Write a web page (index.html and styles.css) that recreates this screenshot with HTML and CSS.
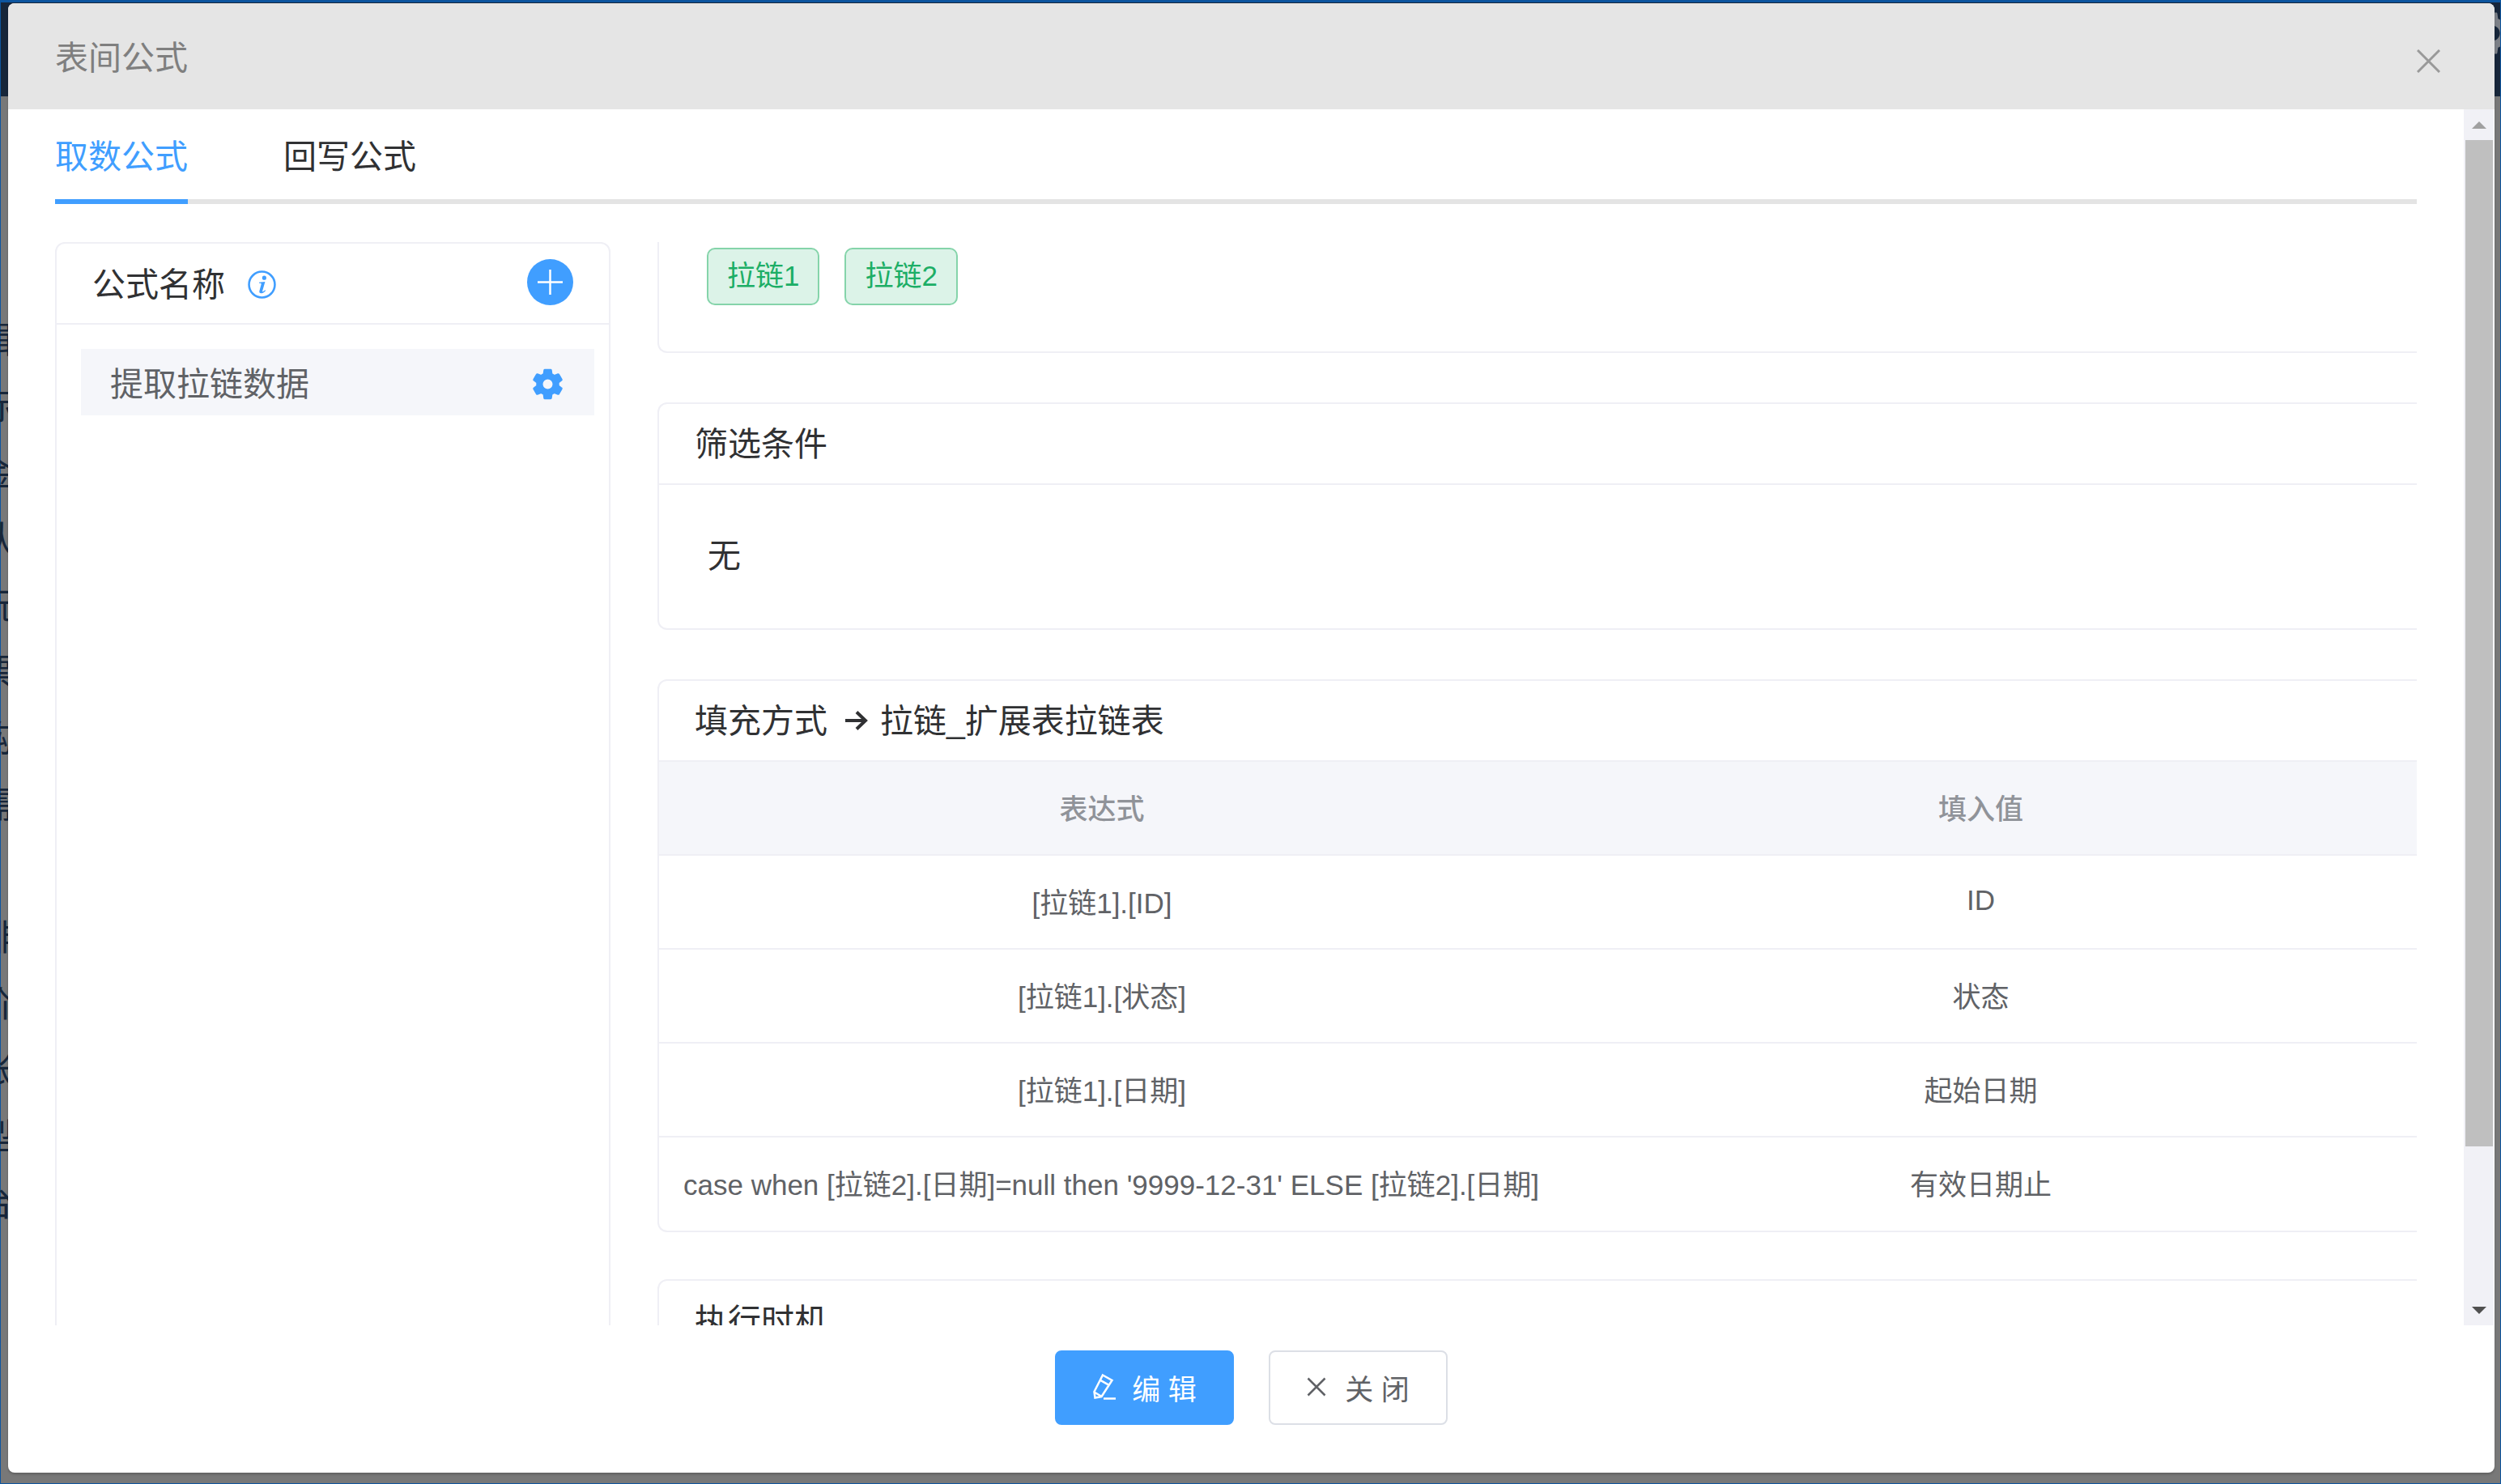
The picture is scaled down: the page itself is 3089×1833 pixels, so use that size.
FILE: index.html
```html
<!DOCTYPE html>
<html lang="zh-CN">
<head>
  <meta charset="UTF-8">
  <title>表间公式</title>
  <link rel="stylesheet" href="styles.css">
</head>
<body>
  <div class="desktop">
    <div class="desktop-top">
      <svg class="desktop-gear" viewBox="0 0 24 24"><path d="M19.14 12.94c.04-.3.06-.61.06-.94 0-.32-.02-.64-.07-.94l2.03-1.58c.18-.14.23-.41.12-.61l-1.92-3.32c-.12-.22-.37-.29-.59-.22l-2.39.96c-.5-.38-1.03-.7-1.62-.94l-.36-2.54c-.04-.24-.24-.41-.48-.41h-3.84c-.24 0-.43.17-.47.41l-.36 2.54c-.59.24-1.13.57-1.62.94l-2.39-.96c-.22-.08-.47 0-.59.22L2.74 8.87c-.12.21-.08.47.12.61l2.03 1.58c-.05.3-.09.63-.09.94s.02.64.07.94l-2.03 1.58c-.18.14-.23.41-.12.61l1.92 3.32c.12.22.37.29.59.22l2.39-.96c.5.38 1.03.7 1.62.94l.36 2.54c.05.24.24.41.48.41h3.84c.24 0 .44-.17.47-.41l.36-2.54c.59-.24 1.13-.56 1.62-.94l2.39.96c.22.08.47 0 .59-.22l1.92-3.32c.12-.22.07-.47-.12-.61l-2.01-1.58zM12 15.6c-1.98 0-3.6-1.62-3.6-3.6s1.62-3.6 3.6-3.6 3.6 1.62 3.6 3.6-1.62 3.6-3.6 3.6z"/></svg>
    </div>
    <div class="desktop-menu">
      <span>辑</span><span>际</span><span>金</span><span>认</span><span>玩</span><span>票</span><span>购</span><span>需</span>
      <span></span><span>排</span><span>价</span><span>帐</span><span>型</span><span>台</span><span>B</span><span>B</span>
    </div>
  </div>

  <div class="dialog">
    <div class="dialog-header">
      <span class="dialog-title">表间公式</span>
      <svg class="dialog-close" viewBox="0 0 29 29"><path d="M1 1l27 27M28 1L1 28"/></svg>
    </div>

    <div class="dialog-body">
      <div class="main">
        <div class="tabs">
          <div class="tab active">取数公式</div>
          <div class="tab">回写公式</div>
        </div>

        <div class="panes">
          <div class="card formula-list">
            <div class="card-title list-title">
              <span>公式名称</span>
              <svg class="info-icon" viewBox="0 0 34 34">
                <circle cx="17" cy="17" r="15.5"/>
                <path class="info-mark" d="M19.8 6.4a2.5 2.5 0 1 1 0 5a2.5 2.5 0 0 1 0-5zM13.6 14.4l7.2-.9-3.2 11.2c-.2.8.3 1 .9.6l2.4-1.8.6.8c-1.5 1.6-3.1 3-5.1 3.2-2 .1-2.9-1-2.4-2.9l2.2-8c.2-.8-.3-1.2-2.6-1.2z"/>
              </svg>
              <div class="add-btn">
                <svg viewBox="0 0 57 57"><path d="M28.5 13v31M13 28.5h31"/></svg>
              </div>
            </div>
            <div class="formula-item">
              <span>提取拉链数据</span>
              <svg class="gear-icon" viewBox="1.6 1.6 20.8 20.8"><path d="M19.14 12.94c.04-.3.06-.61.06-.94 0-.32-.02-.64-.07-.94l2.03-1.58c.18-.14.23-.41.12-.61l-1.92-3.32c-.12-.22-.37-.29-.59-.22l-2.39.96c-.5-.38-1.03-.7-1.62-.94l-.36-2.54c-.04-.24-.24-.41-.48-.41h-3.84c-.24 0-.43.17-.47.41l-.36 2.54c-.59.24-1.13.57-1.62.94l-2.39-.96c-.22-.08-.47 0-.59.22L2.74 8.87c-.12.21-.08.47.12.61l2.03 1.58c-.05.3-.09.63-.09.94s.02.64.07.94l-2.03 1.58c-.18.14-.23.41-.12.61l1.92 3.32c.12.22.37.29.59.22l2.39-.96c.5.38 1.03.7 1.62.94l.36 2.54c.05.24.24.41.48.41h3.84c.24 0 .44-.17.47-.41l.36-2.54c.59-.24 1.13-.56 1.62-.94l2.39.96c.22.08.47 0 .59-.22l1.92-3.32c.12-.22.07-.47-.12-.61l-2.01-1.58zM12 15.6c-1.98 0-3.6-1.62-3.6-3.6s1.62-3.6 3.6-3.6 3.6 1.62 3.6 3.6-1.62 3.6-3.6 3.6z"/></svg>
            </div>
          </div>

          <div class="detail">
            <div class="card tags-card">
              <span class="tag">拉链1</span>
              <span class="tag">拉链2</span>
            </div>

            <div class="card filter-card">
              <div class="card-title">筛选条件</div>
              <div class="filter-text">无</div>
            </div>

            <div class="card fill-card">
              <div class="card-title">
                <span>填充方式</span>
                <svg class="arrow-icon" viewBox="0 0 30 26"><path d="M2 13h25M16 2.5L27 13 16 23.5"/></svg>
                <span>拉链_扩展表拉链表</span>
              </div>
              <table class="fill-table">
                <thead>
                  <tr><th class="col-expr">表达式</th><th>填入值</th></tr>
                </thead>
                <tbody>
                  <tr><td>[拉链1].[ID]</td><td>ID</td></tr>
                  <tr><td>[拉链1].[状态]</td><td>状态</td></tr>
                  <tr><td>[拉链1].[日期]</td><td>起始日期</td></tr>
                  <tr><td>case when [拉链2].[日期]=null then '9999-12-31' ELSE [拉链2].[日期]</td><td>有效日期止</td></tr>
                </tbody>
              </table>
            </div>

            <div class="card">
              <div class="card-title">执行时机</div>
            </div>
          </div>
        </div>
      </div>

      <div class="scrollbar">
        <div class="scroll-btn"><i class="arrow-up"></i></div>
        <div class="scroll-thumb"></div>
        <div class="scroll-rest"><i class="arrow-down"></i></div>
      </div>
    </div>

    <div class="dialog-footer">
      <button class="btn btn-primary">
        <svg viewBox="0 0 30 34"><path d="M13 2.5L24.5 9 11.5 29l-8 1.500-1-7.500zM9.700 8.700l12 6.600M1.700 23l9.600 5.700M14 31.500h15"/></svg>
        <span>编 辑</span>
      </button>
      <button class="btn btn-close">
        <svg viewBox="0 0 24 24"><path d="M1.500 1.500l21 21M22.500 1.500l-21 21"/></svg>
        <span>关 闭</span>
      </button>
    </div>
  </div>
</body>
</html>
```

FILE: styles.css
```css
* {
  margin: 0;
  padding: 0;
  box-sizing: border-box;
}
html,
body {
  width: 3089px;
  height: 1833px;
  overflow: hidden;
}
body {
  position: relative;
  font-family: "Liberation Sans", "Noto Sans CJK SC", sans-serif;
  color: #303133;
}

/* page behind the dialog */
.desktop {
  height: 100%;
  border: 1px solid #0d559f;
  border-top-width: 3px;
  background-color: #787878;
}
.desktop-top {
  position: relative;
  height: 116px;
  background-color: #17263a;
  overflow: hidden;
}
.desktop-gear {
  position: absolute;
  right: -22px;
  top: 6px;
  width: 64px;
  height: 64px;
  fill: #7c8087;
}
.desktop-menu {
  display: flex;
  flex-direction: column;
  margin: 280px 0 0 -28px;
  font-size: 44px;
  color: #17263a;
}
.desktop-menu span {
  height: 82px;
  line-height: 44px;
}

/* dialog */
.dialog {
  position: absolute;
  left: 10px;
  top: 4px;
  width: 3071px;
  height: 1815px;
  display: flex;
  flex-direction: column;
  border-radius: 8px;
  background-color: #fff;
  box-shadow: 0 2px 3px rgba(0,0,0,.2);
  overflow: hidden;
}
.dialog-header {
  display: flex;
  flex: none;
  align-items: center;
  justify-content: space-between;
  height: 131px;
  padding: 0 67px 0 58px;
  background-color: #e5e5e5;
}
.dialog-title {
  margin-bottom: 3px;
  font-size: 41px;
  color: #7f7f7f;
}
.dialog-close {
  width: 29px;
  height: 29px;
  margin-top: 11px;
}
.dialog-close path {
  fill: none;
  stroke: #999;
  stroke-width: 3;
}
.dialog-body {
  display: flex;
  height: 1502px;
}
.main {
  flex: 1;
  min-width: 0;
  padding: 0 58px;
}

/* tabs */
.tabs {
  display: flex;
  gap: 118px;
  height: 117px;
  border-bottom: 6px solid #e4e4e4;
}
.tab {
  width: 164px;
  height: 117px;
  padding-top: 5px;
  line-height: 108px;
  text-align: center;
  font-size: 41px;
}
.tab.active {
  border-bottom: 6px solid #409eff;
  color: #409eff;
}

/* cards */
.panes {
  display: flex;
  gap: 58px;
  height: 1338px;
  margin-top: 47px;
  overflow: hidden;
}
.card {
  flex: none;
  border: 2px solid #efeff5;
  border-right: 0;
  border-radius: 12px 0 0 12px;
  margin-bottom: 61px;
}
.card-title {
  display: flex;
  align-items: center;
  height: 100px;
  padding: 0 0 6px 44px;
  border-bottom: 2px solid #efeff5;
  font-size: 41px;
}
.formula-list {
  width: 686px;
  height: 1400px;
  border-right: 2px solid #efeff5;
  border-radius: 12px;
}
.list-title {
  padding: 0 44px 4px 44px;
}
.info-icon {
  width: 35px;
  height: 35px;
  margin: 7px 0 0 28px;
  fill: none;
  stroke: #409eff;
  stroke-width: 2.500;
}
.info-mark {
  fill: #409eff;
  stroke: none;
}
.add-btn {
  display: flex;
  width: 57px;
  height: 57px;
  margin-left: auto;
  border-radius: 50%;
  background-color: #409eff;
}
.add-btn path {
  fill: none;
  stroke: #fff;
  stroke-width: 2.500;
}
.formula-item {
  display: flex;
  align-items: center;
  justify-content: space-between;
  height: 82px;
  margin: 30px 18px 0 30px;
  padding: 0 38px 3px 36px;
  background-color: #f5f6fa;
  font-size: 41px;
  color: #606266;
}
.gear-icon {
  width: 39px;
  height: 39px;
  margin-top: 7px;
  fill: #409eff;
  stroke: #409eff;
  stroke-width: .8;
  stroke-linejoin: round;
}

/* right side */
.detail {
  flex: 1;
  min-width: 0;
}
.tags-card {
  display: flex;
  gap: 31px;
  height: 137px;
  padding: 7px 0 0 59px;
  border-top: 0;
  border-radius: 0 0 0 12px;
}
.tag {
  height: 71px;
  padding: 0 23px;
  line-height: 65px;
  border: 2px solid #85d4aa;
  border-radius: 10px;
  background-color: #dcf3e8;
  font-size: 35px;
  color: #1cae66;
}
.filter-card {
  height: 281px;
}
.filter-text {
  padding: 60px 0 0 60px;
  line-height: 56px;
  font-size: 41px;
}
.fill-card {
  margin-bottom: 58px;
}
.arrow-icon {
  width: 30px;
  height: 26px;
  margin: 6px 15px 0 20px;
  fill: none;
  stroke: #303133;
  stroke-width: 4;
}

/* table */
.fill-table {
  width: 100%;
  table-layout: fixed;
  border-collapse: separate;
  border-spacing: 0;
  font-size: 35px;
  color: #606266;
  text-align: center;
}
.col-expr {
  width: 1094px;
}
.fill-table th {
  height: 116px;
  padding-bottom: 4px;
  border-bottom: 2px solid #efeff5;
  background-color: #f5f6fa;
  font-weight: 500;
  color: #909399;
}
.fill-table td {
  height: 116px;
  padding: 0 30px 4px;
  border-bottom: 2px solid #efeff5;
  white-space: nowrap;
}
.fill-table tr:last-child td {
  height: 115px;
  border-bottom: 0;
}

/* scrollbar */
.scrollbar {
  display: flex;
  flex-direction: column;
  flex: none;
  width: 37px;
  margin-right: 1px;
  background-color: #f1f1f6;
}
.scroll-btn {
  display: flex;
  justify-content: center;
  height: 38px;
  padding-top: 15px;
}
.arrow-up {
  width: 0;
  height: 0;
  border: 9px solid transparent;
  border-top: 0;
  border-bottom-color: #a0a0a0;
}
.scroll-thumb {
  height: 1243px;
  margin: 0 1px 0 2px;
  background-color: #bfbfbf;
}
.scroll-rest {
  display: flex;
  flex: 1;
  justify-content: center;
  align-items: flex-end;
  padding-bottom: 14px;
}
.arrow-down {
  width: 0;
  height: 0;
  border: 9px solid transparent;
  border-bottom: 0;
  border-top-color: #505050;
}

/* footer */
.dialog-footer {
  display: flex;
  flex: 1;
  justify-content: center;
  gap: 43px;
  padding-top: 31px;
}
.btn {
  display: flex;
  align-items: center;
  justify-content: center;
  gap: 19px;
  width: 221px;
  height: 92px;
  padding-bottom: 2px;
  border: 2px solid #dcdfe6;
  border-radius: 8px;
  background-color: #fff;
  font-family: inherit;
  font-size: 35px;
  color: #606266;
}
.btn svg {
  width: 24px;
  height: 24px;
  fill: none;
  stroke: #606266;
  stroke-width: 2.500;
}
.btn-close {
  gap: 23px;
}
.btn-primary {
  border-color: #409eff;
  background-color: #409eff;
  color: #fff;
}
.btn-primary svg {
  width: 30px;
  height: 34px;
  stroke: #fff;
}
```
